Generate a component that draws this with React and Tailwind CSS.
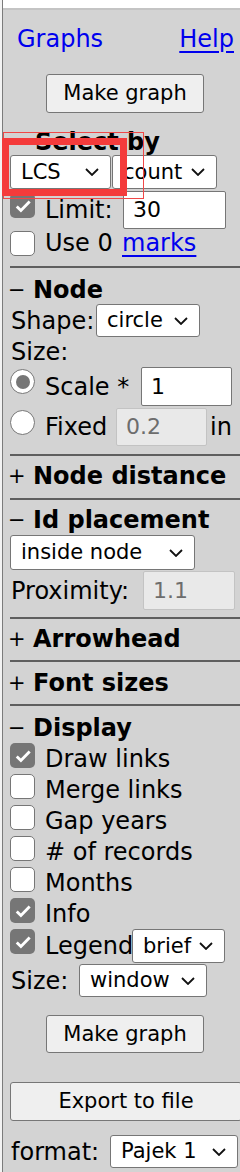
import React from 'react';

const Chevron = () => (
    <svg width="14" height="8" viewBox="0 0 14 8" className="shrink-0">
        <path d="M1 1l6 6 6-6" fill="none" stroke="#111" strokeWidth="1.8" />
    </svg>
);

function Select({ label, className }) {
    return (
        <div
            className={`flex items-center justify-between bg-white border border-[#767676] rounded-[3px] pl-[10px] pr-[11px] shrink-0 overflow-hidden text-[21px] ${className}`}
        >
            <span className="whitespace-nowrap">{label}</span>
            <Chevron />
        </div>
    );
}

function Input({ value, disabled, className }) {
    return (
        <div
            className={`flex items-center pl-[9px] rounded-[2px] shrink-0 text-[22px] ${
                disabled ? 'bg-[#e9e9e9] border border-[#c3c3c3] text-[#6d6d6d]' : 'bg-white border border-[#767676]'
            } ${className}`}
        >
            {value}
        </div>
    );
}

function Check({ checked, className = '' }) {
    if (checked) {
        return (
            <div className={`w-[25px] h-[25px] rounded-[5px] bg-[#767676] flex items-center justify-center shrink-0 ${className}`}>
                <svg width="20" height="20" viewBox="0 0 24 24">
                    <path d="M4.5 12.5l5 5L20 6.5" fill="none" stroke="#fff" strokeWidth="3.4" />
                </svg>
            </div>
        );
    }
    return <div className={`w-[25px] h-[25px] rounded-[5px] bg-white border-[1.5px] border-[#767676] shrink-0 ${className}`} />;
}

function Radio({ checked, className = '' }) {
    return (
        <div
            className={`w-[25px] h-[25px] rounded-full bg-white border-[1.5px] border-[#767676] flex items-center justify-center shrink-0 ${className}`}
        >
            {checked && <div className="w-[14px] h-[14px] rounded-full bg-[#767676]" />}
        </div>
    );
}

function Heading({ open, title, className = '' }) {
    return (
        <div className={`flex items-center h-[28px] ${className}`}>
            <span className="w-[13px] -ml-[2px] text-[21px] whitespace-nowrap">{open ? '−' : '+'}</span>
            <span className="font-bold ml-[12px] whitespace-nowrap">{title}</span>
        </div>
    );
}

const Rule = ({ className }) => <div className={`h-[2px] bg-[#5e5e5e] ${className}`} />;

function CheckRow({ checked, label, children }) {
    return (
        <div className="flex items-center h-[31px]">
            <Check checked={checked} className="mb-[6px]" />
            <span className="ml-[10px] whitespace-nowrap">{label}</span>
            {children}
        </div>
    );
}

export default function App() {
    return (
        <div className="relative flex w-[240px] h-[1172px] overflow-hidden bg-white text-black text-[24px] leading-none font-['DejaVu_Sans',sans-serif]">
            <div className="w-[2px] bg-[#f3f3f3]" />
            <div className="w-[1px] bg-[#7b7b7b]" />
            <div className="flex-1 flex flex-col min-w-0">
                <div className="h-[8px] bg-white" />
                <div className="h-[2px] bg-[#c4c4c4]" />
                <div className="flex-1 bg-[#d3d3d3] pl-[7px] flex flex-col">
                    {/* top links */}
                    <div className="flex items-center justify-between h-[28px] mt-[15px] pl-[7px] pr-[6px]">
                        <span className="text-[#0000ee]">Graphs</span>
                        <span className="text-[#0000ee] underline underline-offset-[4px]">Help</span>
                    </div>
                    <button className="mt-[21px] mx-auto w-[158px] h-[39px] bg-[#efefef] border border-[#767676] rounded-[3px] text-[21px]">
                        Make graph
                    </button>

                    {/* select by */}
                    <div className="mt-[15px] h-[27px] flex items-center pl-[25px] font-bold">Select by</div>
                    <div className="flex gap-[1px]">
                        <Select label="LCS" className="w-[101px] h-[34px]" />
                        <Select label="count" className="w-[105px] h-[34px]" />
                    </div>
                    <div className="flex items-center h-[38px] mt-[2px]">
                        <Check checked className="mb-[9px]" />
                        <span className="ml-[10px] w-[78px]">Limit:</span>
                        <Input value="30" className="w-[103px] h-[38px]" />
                    </div>
                    <div className="flex items-center h-[28px]">
                        <Check />
                        <span className="ml-[10px] w-[77px]">Use 0</span>
                        <span className="text-[#0000ee] underline underline-offset-[4px]">marks</span>
                    </div>
                    <Rule className="mt-[9px]" />

                    {/* node */}
                    <Heading open title="Node" className="mt-[8px]" />
                    <div className="flex items-center h-[33px]">
                        <span className="w-[86px] pl-[1px]">Shape:</span>
                        <Select label="circle" className="w-[104px] h-[33px]" />
                    </div>
                    <div className="flex items-center h-[30px] pl-[1px]">Size:</div>
                    <div className="flex items-center h-[39px]">
                        <Radio checked className="mb-[10px]" />
                        <span className="ml-[10px] w-[96px] whitespace-nowrap">Scale *</span>
                        <Input value="1" className="w-[91px] h-[39px]" />
                    </div>
                    <div className="flex items-center h-[38px] mt-[2px]">
                        <Radio className="mb-[9px]" />
                        <span className="ml-[10px] w-[71px]">Fixed</span>
                        <Input value="0.2" disabled className="w-[91px] h-[38px]" />
                        <span className="ml-[3px]">in</span>
                    </div>
                    <Rule className="mt-[8px]" />

                    <Heading title="Node distance" className="mt-[6px]" />
                    <Rule className="mt-[8px]" />

                    <Heading open title="Id placement" className="mt-[6px]" />
                    <Select label="inside node" className="mt-[1px] w-[185px] h-[35px]" />
                    <div className="flex items-center h-[39px] mt-[1px]">
                        <span className="w-[133px] pl-[1px]">Proximity:</span>
                        <Input value="1.1" disabled className="w-[92px] h-[39px]" />
                    </div>
                    <Rule className="mt-[7px]" />

                    <Heading title="Arrowhead" className="mt-[6px]" />
                    <Rule className="mt-[7px]" />

                    <Heading title="Font sizes" className="mt-[7px]" />
                    <Rule className="mt-[7px]" />

                    {/* display */}
                    <Heading open title="Display" className="mt-[8px]" />
                    <div className="flex flex-col mt-[1px]">
                        <CheckRow checked label="Draw links" />
                        <CheckRow label="Merge links" />
                        <CheckRow label="Gap years" />
                        <CheckRow label="# of records" />
                        <CheckRow label="Months" />
                        <CheckRow checked label="Info" />
                        <div className="flex items-center h-[34px]">
                            <Check checked className="mb-[9px]" />
                            <span className="ml-[10px] w-[87px]">Legend</span>
                            <Select label="brief" className="w-[93px] h-[34px]" />
                        </div>
                    </div>
                    <div className="flex items-center h-[33px] mt-[1px]">
                        <span className="w-[69px] pl-[1px]">Size:</span>
                        <Select label="window" className="w-[128px] h-[33px]" />
                    </div>
                    <button className="mt-[18px] mx-auto w-[158px] h-[38px] bg-[#efefef] border border-[#767676] rounded-[3px] text-[21px]">
                        Make graph
                    </button>
                    <button className="mt-[29px] w-[232px] shrink-0 h-[39px] bg-[#efefef] border border-[#767676] rounded-[3px] text-[21px]">
                        Export to file
                    </button>
                    <div className="flex items-center h-[33px] mt-[14px]">
                        <span className="w-[100px] pl-[1px]">format:</span>
                        <Select label="Pajek 1" className="w-[128px] h-[33px]" />
                    </div>
                </div>
            </div>

            {/* red highlight overlays */}
            <div className="absolute left-[3px] top-[132px] w-[141px] h-[67px] border border-[#f04848]" />
            <div className="absolute left-[2px] top-[138px] w-[125px] h-[58px] border-[7px] border-[#f43b3b]" />
        </div>
    );
}
